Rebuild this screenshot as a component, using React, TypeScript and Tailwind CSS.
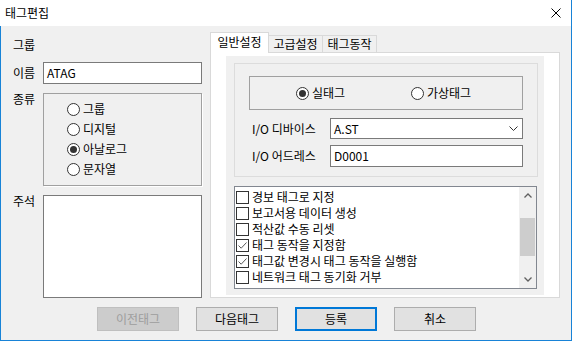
import type { FC } from "react";

type ItemProps = { label: string; checked?: boolean };

const Radio: FC<ItemProps> = ({ label, checked }) => (
  <div className="flex items-center gap-[3px]">
    <span className="flex h-[13px] w-[13px] items-center justify-center rounded-full border border-[#333333] bg-white">
      {checked && <span className="h-[7px] w-[7px] rounded-full bg-[#333333]" />}
    </span>
    <span>{label}</span>
  </div>
);

const Check: FC<ItemProps> = ({ label, checked }) => (
  <div className="flex h-[16px] items-center gap-[3px] whitespace-nowrap">
    <span className="flex h-[13px] w-[13px] shrink-0 items-center justify-center border border-[#333333] bg-white">
      {checked && (
        <svg width="11" height="11" viewBox="0 0 11 11">
          <path d="M1.5 5.5 L4.2 8.2 L9.5 2.5" stroke="#5a5a5a" strokeWidth="1" fill="none" />
        </svg>
      )}
    </span>
    <span>{label}</span>
  </div>
);

const options = [
  { label: "경보 태그로 지정", checked: false },
  { label: "보고서용 데이터 생성", checked: false },
  { label: "적산값 수동 리셋", checked: false },
  { label: "태그 동작을 지정함", checked: true },
  { label: "태그값 변경시 태그 동작을 실행함", checked: true },
  { label: "네트워크 태그 동기화 거부", checked: false },
];

export default function App() {
  return (
    <div className='flex h-[341px] w-[572px] flex-col bg-white text-[12px] leading-[16px] text-black font-["Noto_Sans_CJK_KR","Noto_Sans",sans-serif]'>
      {/* title bar */}
      <div className="flex h-[26px] items-center justify-between border-r border-[#1883d7] pl-[5px] pr-[10px]">
        <span>태그편집</span>
        <svg width="10" height="10" viewBox="0 0 10 10">
          <path d="M0.5 0.5 L9.5 9.5 M9.5 0.5 L0.5 9.5" stroke="#000" strokeWidth="1" />
        </svg>
      </div>

      <div className="flex flex-1 flex-col border-x border-b border-[#1883d7] bg-[#f0f0f0]">
        <div className="flex pl-[12px] pt-[6px]">
          {/* left column */}
          <div className="flex w-[189px] flex-col pt-[2px]">
            <div className="flex h-[22px] items-center">그룹</div>
            <div className="mt-[6px] flex h-[22px] items-center">
              <span className="w-[30px]">이름</span>
              <div className="flex h-[22px] w-[159px] items-center border border-[#7a7a7a] bg-white px-[3px]">
                ATAG
              </div>
            </div>
            <div className="mt-[9px] flex">
              <span className="-mt-[2px] w-[30px]">종류</span>
              <div className="flex h-[93px] w-[159px] flex-col border border-[#a0a0a0] pl-[23px] pt-[5px] shadow-[1px_1px_0_#ffffff]">
                {["그룹", "디지털", "아날로그", "문자열"].map((t) => (
                  <div key={t} className="flex h-[20px] items-center">
                    <Radio label={t} checked={t === "아날로그"} />
                  </div>
                ))}
              </div>
            </div>
            <div className="mt-[9px] flex">
              <span className="-mt-[2px] w-[30px]">주석</span>
              <div className="h-[103px] w-[159px] border border-[#7a7a7a] bg-white" />
            </div>
          </div>

          {/* tab control */}
          <div className="ml-[8px] flex w-[350px] flex-col">
            <div className="flex h-[20px] items-end">
              <div className="relative z-10 -mb-px flex h-[21px] w-[59px] items-center justify-center border-x border-t border-[#d9d9d9] bg-white pb-[2px]">
                일반설정
              </div>
              <div className="flex h-[17px] w-[54px] items-center justify-center border-r border-t border-[#d9d9d9] bg-[#f0f0f0]">
                고급설정
              </div>
              <div className="flex h-[17px] w-[54px] items-center justify-center border-r border-t border-[#d9d9d9] bg-[#f0f0f0]">
                태그동작
              </div>
            </div>
            <div className="flex h-[246px] flex-col border border-[#d9d9d9] bg-white px-[15px] pb-[2px] pt-[3px]">
              <div className="flex flex-1 flex-col bg-[#f0f0f0] pl-[8px]">
                <div className="mt-[7px] flex h-[114px] w-[304px] flex-col border border-[#dcdcdc] px-[14px] pt-[12px]">
                  <div className="flex h-[34px] w-[274px] items-center border border-[#a0a0a0] pl-[46px]">
                    <div className="w-[115px]">
                      <Radio label="실태그" checked />
                    </div>
                    <Radio label="가상태그" />
                  </div>
                  <div className="mt-[8px] flex h-[21px] items-center">
                    <span className="w-[81px] pl-[3px]">I/O 디바이스</span>
                    <div className="flex h-[21px] w-[193px] items-center justify-between border border-[#7a7a7a] bg-white pl-[3px] pr-[4px]">
                      <span>A.ST</span>
                      <svg width="9" height="5" viewBox="0 0 9 5">
                        <path d="M0.5 0.5 L4.5 4.5 L8.5 0.5" stroke="#333" strokeWidth="1" fill="none" />
                      </svg>
                    </div>
                  </div>
                  <div className="mt-[6px] flex h-[22px] items-center">
                    <span className="w-[81px] pl-[3px]">I/O 어드레스</span>
                    <div className="flex h-[22px] w-[193px] items-center border border-[#7a7a7a] bg-white pl-[3px]">
                      D0001
                    </div>
                  </div>
                </div>

                <div className="mt-[9px] flex h-[103px] w-[303px] border border-[#828790] bg-white">
                  <div className="flex flex-1 flex-col overflow-hidden pl-[1px] pt-[2px]">
                    {options.map((o) => (
                      <Check key={o.label} label={o.label} checked={o.checked} />
                    ))}
                  </div>
                  <div className="flex w-[17px] flex-col bg-[#f0f0f0]">
                    <div className="flex h-[17px] items-center justify-center">
                      <svg width="8" height="5" viewBox="0 0 8 5">
                        <path d="M0.5 4.5 L4 1 L7.5 4.5" stroke="#606060" strokeWidth="1.3" fill="none" />
                      </svg>
                    </div>
                    <div className="mx-[1px] mt-[14px] h-[38px] bg-[#cdcdcd]" />
                    <div className="flex-1" />
                    <div className="flex h-[17px] items-center justify-center">
                      <svg width="8" height="5" viewBox="0 0 8 5">
                        <path d="M0.5 0.5 L4 4 L7.5 0.5" stroke="#606060" strokeWidth="1.3" fill="none" />
                      </svg>
                    </div>
                  </div>
                </div>
              </div>
            </div>
          </div>
        </div>

        {/* buttons */}
        <div className="mt-[9px] flex gap-[17px] pl-[96px]">
          <div className="flex h-[24px] w-[82px] items-center justify-center border border-[#bfbfbf] bg-[#cccccc] text-[#9d9d9d]">
            이전태그
          </div>
          <div className="flex h-[24px] w-[82px] items-center justify-center border border-[#adadad] bg-[#e1e1e1]">
            다음태그
          </div>
          <div className="flex h-[24px] w-[82px] items-center justify-center border-2 border-[#0078d7] bg-[#e1e1e1]">
            등록
          </div>
          <div className="flex h-[24px] w-[82px] items-center justify-center border border-[#adadad] bg-[#e1e1e1]">
            취소
          </div>
        </div>
      </div>
    </div>
  );
}
